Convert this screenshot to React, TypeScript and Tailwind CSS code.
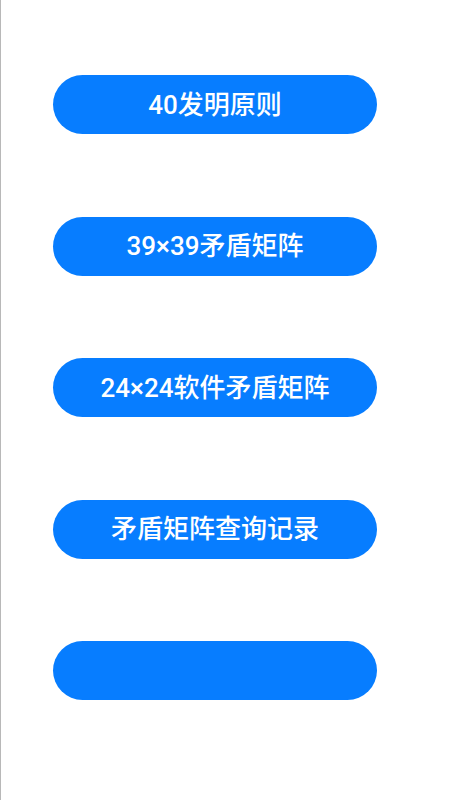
import React from "react";

const items = ["40发明原则", "39×39矛盾矩阵", "24×24软件矛盾矩阵", "矛盾矩阵查询记录", ""];

export default function App() {
  return (
    <div
      className="min-h-[800px] w-[450px] bg-white border-l border-[#b8b8b8] pt-[75px]"
      style={{ fontFamily: "Roboto, 'Noto Sans CJK SC', sans-serif" }}
    >
      <div className="flex flex-col gap-[82.5px] pl-[52px]">
        {items.map((t, i) => (
          <button
            key={i}
            className="flex h-[59px] w-[324px] items-center justify-center rounded-full bg-[#077dff] text-[26px] font-medium leading-none text-white"
          >
            {t}
          </button>
        ))}
      </div>
    </div>
  );
}
